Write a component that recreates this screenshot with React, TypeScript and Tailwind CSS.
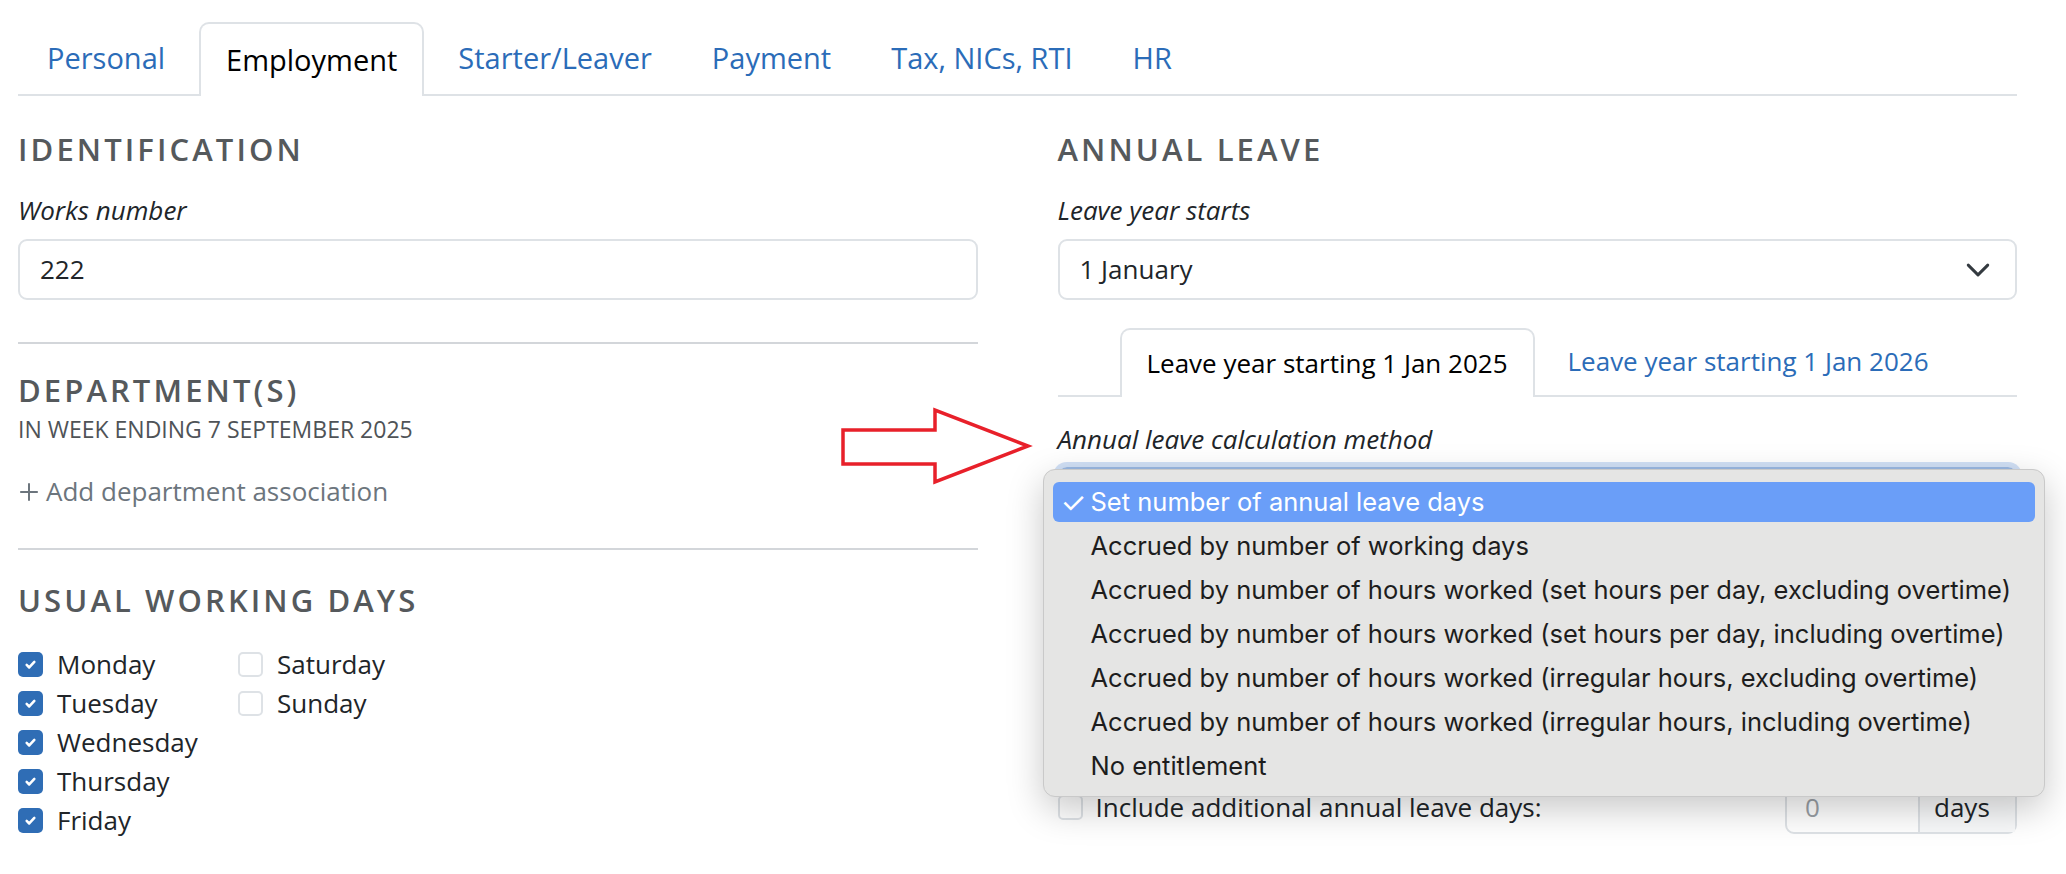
import { ReactNode } from 'react'

const tabs = ['Personal', 'Employment', 'Starter/Leaver', 'Payment', 'Tax, NICs, RTI', 'HR']

const methods = [
  'Set number of annual leave days',
  'Accrued by number of working days',
  'Accrued by number of hours worked (set hours per day, excluding overtime)',
  'Accrued by number of hours worked (set hours per day, including overtime)',
  'Accrued by number of hours worked (irregular hours, excluding overtime)',
  'Accrued by number of hours worked (irregular hours, including overtime)',
  'No entitlement',
]

function Heading({ children }: { children: ReactNode }) {
  return (
    <h2 className="text-[31px] font-semibold uppercase leading-[34px] tracking-[0.1em] text-[#55595c]">
      {children}
    </h2>
  )
}

function Checkbox({ checked }: { checked?: boolean }) {
  if (!checked) {
    return <span className="block h-[25px] w-[25px] shrink-0 rounded-[5px] border-2 border-[#dee2e6] bg-white" />
  }
  return (
    <span className="flex h-[25px] w-[25px] shrink-0 items-center justify-center rounded-[5px] bg-[#2f6db5]">
      <svg viewBox="0 0 20 20" className="h-[17px] w-[17px]">
        <path
          d="m5.5 10.5 3 3 6-6.5"
          fill="none"
          stroke="white"
          strokeWidth="3"
          strokeLinecap="round"
          strokeLinejoin="round"
        />
      </svg>
    </span>
  )
}

function Day({ name, checked }: { name: string; checked?: boolean }) {
  return (
    <div className="flex h-[39px] items-center gap-[14px]">
      <Checkbox checked={checked} />
      <span>{name}</span>
    </div>
  )
}

function Chevron() {
  return (
    <svg viewBox="0 0 16 16" className="h-[26px] w-[26px]">
      <path d="m2 5 6 6 6-6" fill="none" stroke="#343a40" strokeWidth="1.8" strokeLinecap="round" strokeLinejoin="round" />
    </svg>
  )
}

export default function App() {
  return (
    <div className="relative h-[874px] overflow-hidden bg-white font-['Open_Sans',sans-serif] text-[26px] text-[#212529]">
      <div className="ml-[18px] w-[1999px] pt-[22px]">
        {/* top tabs */}
        <nav className="flex gap-[8px] border-b-2 border-[#dee2e6] pl-[3px] text-[29px]">
          {tabs.map((t) =>
            t === 'Employment' ? (
              <span
                key={t}
                className="-mb-[2px] flex h-[74px] items-center rounded-t-[10px] border-2 border-b-0 border-[#dee2e6] bg-white px-[25px] text-black"
              >
                {t}
              </span>
            ) : (
              <span key={t} className="flex h-[72px] items-center px-[26px] text-[#2b6cb8]">
                {t}
              </span>
            ),
          )}
        </nav>

        <div className="grid grid-cols-2 gap-x-[80px] pt-[36px]">
          {/* left column */}
          <section>
            <Heading>Identification</Heading>
            <label className="mt-[25px] block italic leading-[39px]">Works number</label>
            <div className="mt-[9px] flex h-[61px] items-center rounded-[9px] border-2 border-[#dee2e6] px-[20px]">
              222
            </div>
            <div className="mt-[42px] h-[2px] bg-[#d3d6da]" />

            <div className="mt-[29px]">
              <Heading>Department(s)</Heading>
            </div>
            <p className="mt-[7px] text-[23px] uppercase leading-[31px] text-[#4f5357]">
              In week ending 7 September 2025
            </p>
            <div className="mt-[27px] flex items-center gap-[6px] leading-[39px] text-[#6c757d]">
              <svg viewBox="0 0 20 20" className="h-[22px] w-[22px]">
                <path d="M10 2v16M2 10h16" stroke="#6c757d" strokeWidth="1.8" />
              </svg>
              <span>Add department association</span>
            </div>
            <div className="mt-[37px] h-[2px] bg-[#d3d6da]" />

            <div className="mt-[33px]">
              <Heading>Usual working days</Heading>
            </div>
            <div className="mt-[28px] flex">
              <div className="w-[220px]">
                <Day name="Monday" checked />
                <Day name="Tuesday" checked />
                <Day name="Wednesday" checked />
                <Day name="Thursday" checked />
                <Day name="Friday" checked />
              </div>
              <div>
                <Day name="Saturday" />
                <Day name="Sunday" />
              </div>
            </div>
          </section>

          {/* right column */}
          <section>
            <Heading>Annual leave</Heading>
            <label className="mt-[25px] block italic leading-[39px]">Leave year starts</label>
            <div className="mt-[9px] flex h-[61px] items-center justify-between rounded-[9px] border-2 border-[#dee2e6] pl-[20px] pr-[24px]">
              <span>1 January</span>
              <Chevron />
            </div>

            <div className="mt-[28px] flex gap-[8px] border-b-2 border-[#dee2e6] pl-[62px]">
              <span className="-mb-[2px] flex h-[69px] items-center rounded-t-[10px] border-2 border-b-0 border-[#dee2e6] bg-white px-[25px] text-black">
                Leave year starting 1 Jan 2025
              </span>
              <span className="flex h-[67px] items-center px-[25px] text-[#2b6cb8]">
                Leave year starting 1 Jan 2026
              </span>
            </div>

            <label className="mt-[23px] block italic leading-[39px]">Annual leave calculation method</label>
            <div className="relative mt-[8px]">
              <div className="flex h-[61px] items-center justify-between rounded-[9px] border-2 border-[#9bb9e3] pl-[20px] pr-[24px] shadow-[0_0_0_5px_rgba(70,130,220,0.25)]">
                <span>Set number of annual leave days</span>
                <Chevron />
              </div>

              {/* open native menu */}
              <div className="absolute left-[-15px] top-[2px] z-10 h-[328px] w-[1002px] rounded-[12px] border border-[#c9c9c9] bg-[#e5e5e4] px-[9px] pt-[10px] font-['Inter',sans-serif] text-[25.5px] shadow-[0_12px_36px_rgba(0,0,0,0.22)]">
                {methods.map((m, i) => (
                  <div key={m} className="h-[44px] py-[2px]">
                    <div
                      className={
                        i === 0
                          ? 'flex h-[40px] items-center rounded-[6px] bg-[#6a9ef8] text-white'
                          : 'flex h-[40px] items-center text-[#1d1d1d]'
                      }
                    >
                      <span className="w-[38px] pl-[8px] text-[29px] leading-none">{i === 0 ? '✓' : ''}</span>
                      <span>{m}</span>
                    </div>
                  </div>
                ))}
              </div>
            </div>

            <div className="mt-[253px] flex items-center">
              <Checkbox />
              <span className="ml-[13px]">Include additional annual leave days:</span>
              <div className="ml-auto flex h-[53px] w-[232px] rounded-[9px] border-2 border-[#dee2e6]">
                <span className="flex w-[133px] items-center border-r-2 border-[#dee2e6] pl-[18px] text-[#9aa0a6]">0</span>
                <span className="flex flex-1 items-center bg-[#f8f9fa] pl-[14px]">days</span>
              </div>
            </div>
          </section>
        </div>
      </div>

      {/* annotation arrow */}
      <svg className="pointer-events-none absolute left-0 top-0 h-[874px] w-[2066px]" viewBox="0 0 2066 874">
        <polygon
          points="843,430 935,430 935,410 1028,446 935,482 935,464 843,464"
          fill="white"
          stroke="#e8202a"
          strokeWidth="3.5"
        />
      </svg>
    </div>
  )
}
